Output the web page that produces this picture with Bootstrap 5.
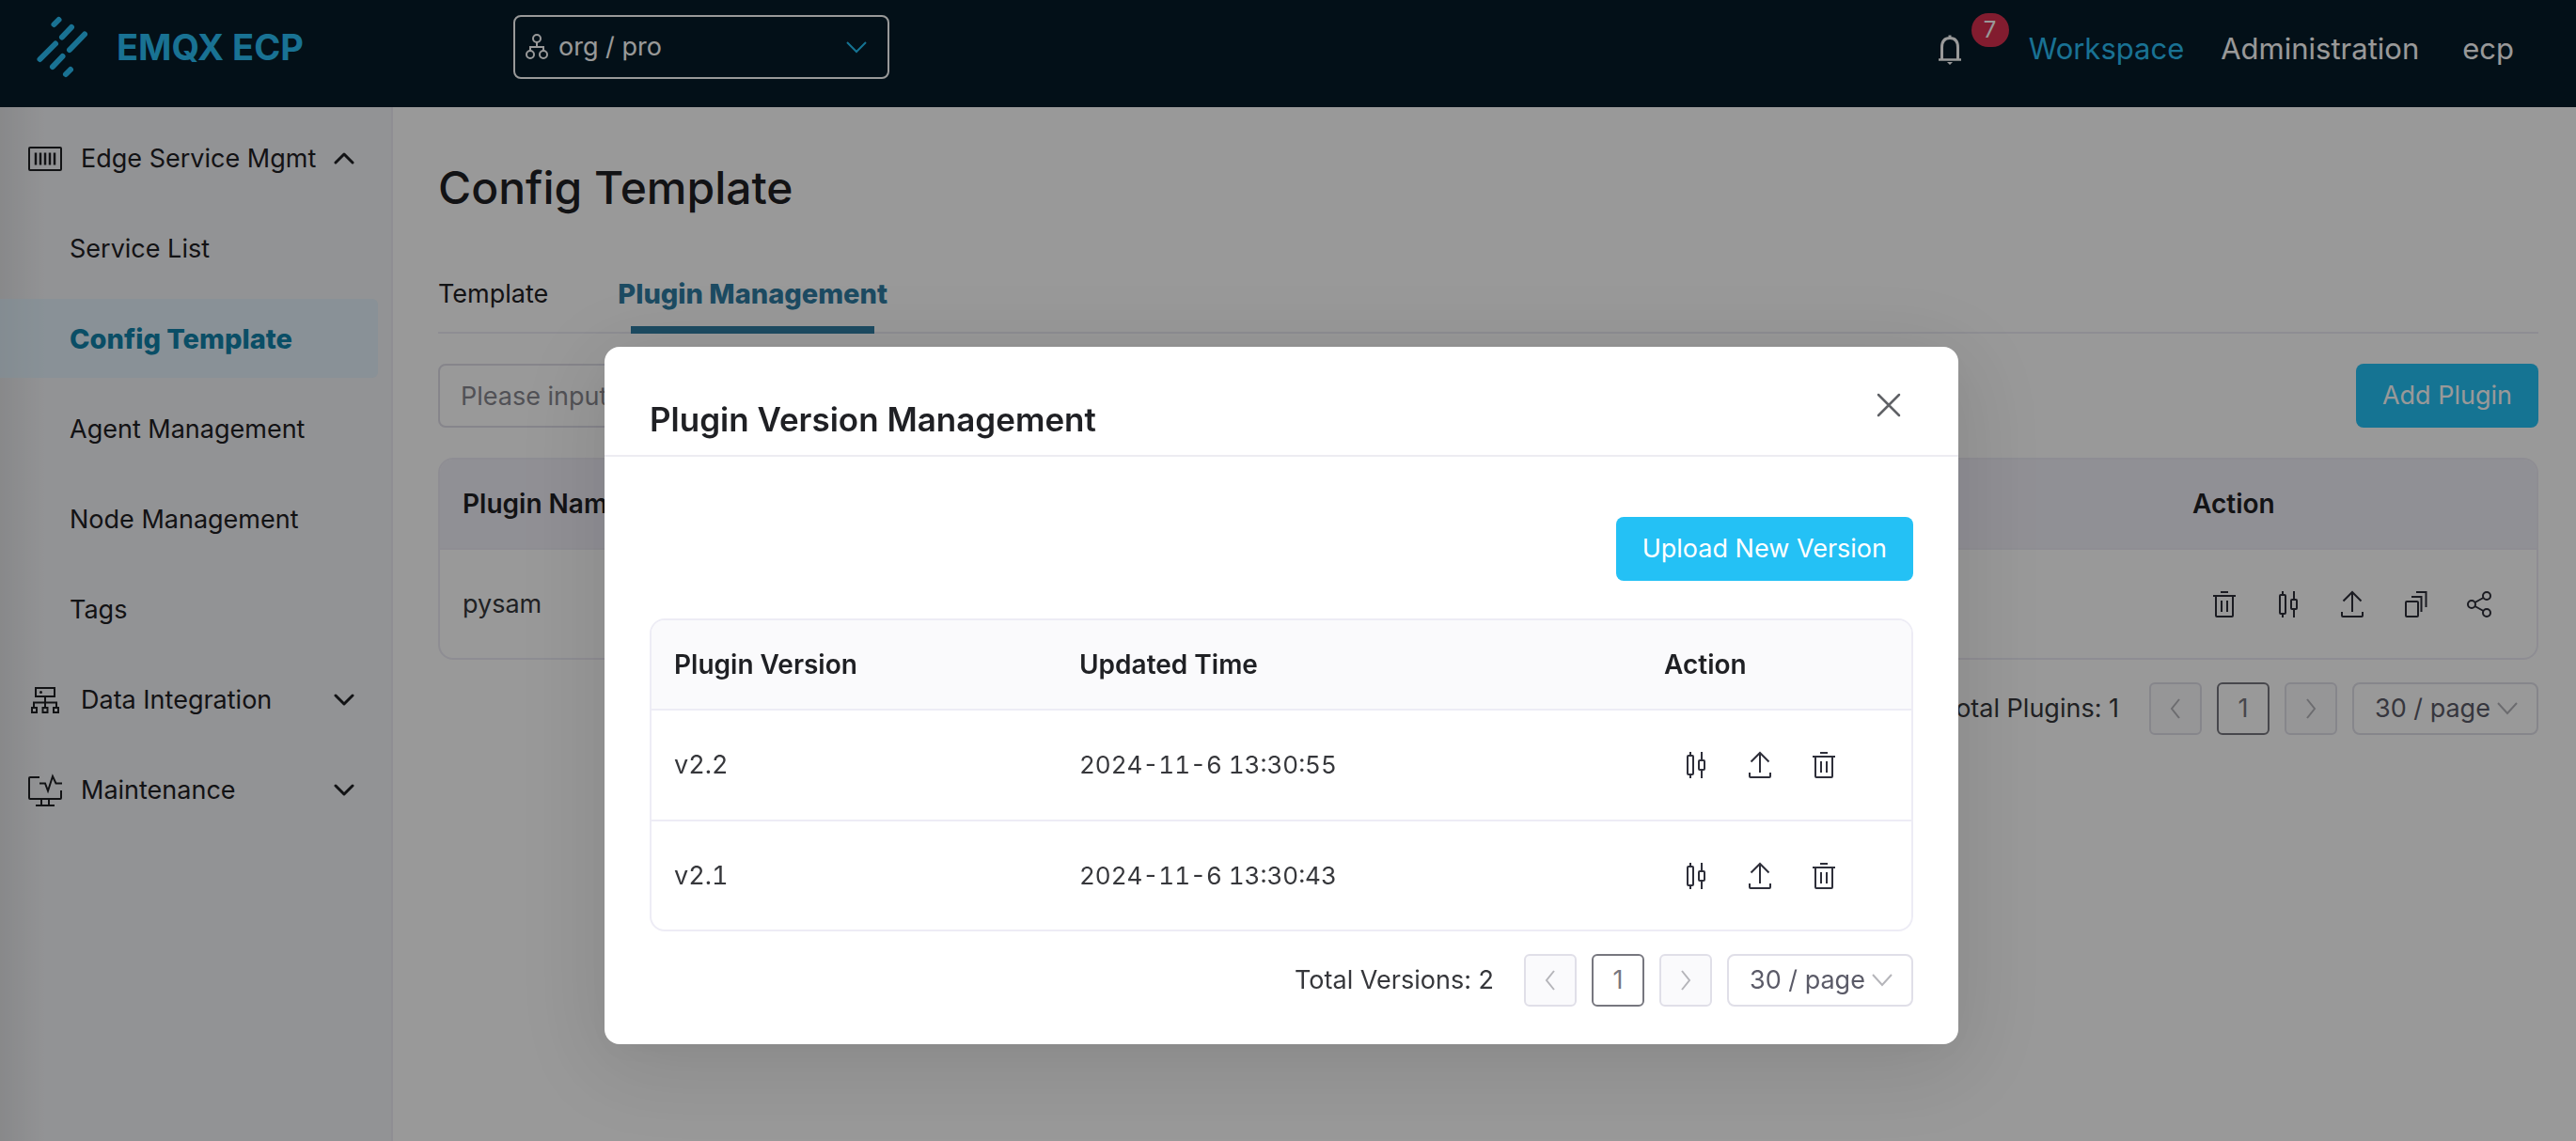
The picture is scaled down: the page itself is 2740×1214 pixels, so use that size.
<!DOCTYPE html>
<html lang="en">
<head>
<meta charset="utf-8">
<meta name="viewport" content="width=device-width, initial-scale=1">
<title>EMQX ECP - Config Template</title>
<link href="https://cdn.jsdelivr.net/npm/bootstrap@5.3.0/dist/css/bootstrap.min.css" rel="stylesheet">
<style>
  :root { --brand: #24c1f5; --line: #edecf5; --ink: #1f2024; }
  body { font-family: Inter, "Liberation Sans", sans-serif; font-size: 27px; line-height: 40px; color: var(--ink); background: #fff; }
  svg { display: block; fill: none; stroke: currentColor; stroke-width: 2; flex: none; }
  a { text-decoration: none; }

  /* top bar */
  .topbar { background: #051c29; height: 114px; padding: 0 66px 14px 36px; }
  .brand-link { width: 510px; gap: 28px; color: #2bbff5; font-size: 38px; font-weight: 700; }
  .brand-link svg { stroke-width: 6; stroke-linecap: round; }
  .org-box { width: 400px; height: 68px; border: 2px solid #fff; border-radius: 8px; color: #fff; padding: 0 8px 0 10px; gap: 10px; }
  .org-box select, .page-size { appearance: none; background: transparent no-repeat; outline: 0; }
  .org-box select { border: 0; color: #fff; width: 100%; padding: 0; background-position: right 14px center;
    background-image: url("data:image/svg+xml,%3Csvg xmlns='http://www.w3.org/2000/svg' width='22' height='14' fill='none' stroke='%2324c1f5' stroke-width='2'%3E%3Cpath d='M1 2l10 10L21 2'/%3E%3C/svg%3E"); }
  .top-links { font-size: 31px; padding-top: 4px; }
  .top-links a { color: #fff; }
  .top-links a.current { color: #2bbff5; margin-right: 39px; }
  .top-links .admin-link { margin-right: 46px; }
  .bell-btn { border: 0; background: none; color: #fff; padding: 0; margin-right: 66px; }
  .bell-count { top: -20px; left: 41px; width: 40px; height: 36px; border-radius: 18px; background: #d9304f; font-size: 24px; line-height: 36px; color: #fff; text-align: center; }

  /* side menu */
  .side { width: 418px; min-height: 1100px; border-right: 2px solid #eeedf5; padding: 12px 14px 0 0;
    background: linear-gradient(90deg, rgba(0,0,0,.07), transparent 48px) #f4f5f8; }
  .side a { height: 84px; margin-bottom: 12px; padding-top: 2px; padding-right: 24px; color: var(--ink); border-radius: 0 6px 6px 0; }
  .side .grp { padding-left: 28px; }
  .side .grp span { margin-left: 18px; }
  .side .sub { padding-left: 74px; }
  .side .sub.current { background: rgba(212,239,255,.5); color: #1283aa; font-size: 29px; font-weight: 800; }
  .chev { stroke-width: 3; stroke-linecap: round; stroke-linejoin: round; }

  /* main */
  .content-pane { padding: 52px 40px 0 48px; }
  .page-title { font-size: 48px; line-height: 68px; font-weight: 500; margin: 0 0 56px; }
  .tab-row { border-bottom: 2px solid var(--line); gap: 74px; height: 65px; margin-bottom: 32px; }
  .tab-row a { color: var(--ink); height: 65px; padding-top: 3px; position: relative; }
  .tab-row a.current { color: #2f7da3; font-size: 29px; font-weight: 800; }
  .tab-row a.current::after { content: ""; position: absolute; left: 14px; right: 14px; bottom: 0; height: 8px; background: #2f7da3; }
  .search-box { width: 560px; height: 68px; border: 2px solid #dfdee8; border-radius: 8px; padding: 0 22px; color: var(--ink); }
  .search-box::placeholder { color: #88888f; }
  .btn-brand { --bs-btn-bg: #24c1f5; --bs-btn-color: #fff; --bs-btn-hover-bg: #3fcbf8; --bs-btn-hover-color: #fff;
    height: 68px; font-size: 27px; line-height: 40px; border: 0; border-radius: 8px; padding: 0 28px; }

  .grid-wrap { border: 2px solid var(--line); border-radius: 16px; overflow: hidden; }
  .grid-wrap table { width: 100%; table-layout: fixed; }
  .grid-wrap th { height: 95px; font-size: 28px; font-weight: 600; background: #fafafc; border-bottom: 2px solid var(--line); padding: 0 24px; }
  .grid-wrap td { height: 118px; padding: 0 24px; color: #36373b; border-bottom: 2px solid var(--line); font-variant-numeric: tabular-nums; }
  .grid-wrap tr:last-child td { border-bottom: 0; height: 116px; }
  .grid-wrap .time-cell { font-size: 26px; }
  .back-grid th { background: #f1f0f9; }
  .act { width: 68px; height: 40px; border: 0; background: none; padding: 0; color: #2e2f3a; }

  .pager { gap: 16px; margin-top: 24px; color: #36373b; }
  .pager .total { margin-right: 16px; }
  .pg { width: 56px; height: 56px; border: 2px solid #e0dfe8; border-radius: 6px; background: #fafafc; color: #b5b5ba; padding: 0; }
  .pg.current { border-color: #77777f; background: #fff; color: #77777f; }
  .page-size { width: 198px; height: 56px; border: 2px solid #e0dfe8; border-radius: 8px; color: #5b5b68; padding: 0 22px; background-position: right 20px center;
    background-image: url("data:image/svg+xml,%3Csvg xmlns='http://www.w3.org/2000/svg' width='22' height='14' fill='none' stroke='%23b5b5ba' stroke-width='2'%3E%3Cpath d='M1 1l10 11L21 1'/%3E%3C/svg%3E"); }

  /* dialog */
  .modal-backdrop { --bs-backdrop-opacity: .4; }
  .version-dialog { max-width: 1440px; margin: 369px 657px 0 auto; }
  .version-dialog .modal-content { border: 0; border-radius: 16px; box-shadow: 0 18px 96px 16px rgba(0,0,0,.1), 0 8px 32px rgba(0,0,0,.03); }
  .version-dialog .modal-header { height: 117px; padding: 0 48px; border-bottom: 2px solid #edecf2; }
  .version-dialog .modal-title { font-size: 35px; line-height: 48px; font-weight: 600; padding-top: 38px; }
  .close-x { border: 0; background: none; padding: 0; color: #606266; margin: 8px 10px 0 0; }
  .version-dialog .modal-body { padding: 64px 48px 40px; }
  .version-dialog .grid-wrap { margin-top: 40px; }
</style>
</head>
<body>
<svg width="0" height="0" class="position-absolute" aria-hidden="true">
  <symbol id="i-trash" viewBox="0 0 32 32"><path d="M12 3h8M4 7h24M7 7v21q0 1 1 1h16q1 0 1-1V7M13 12v12M19 12v12"/></symbol>
  <symbol id="i-candle" viewBox="0 0 32 32"><path d="M10 2v4M10 26v4M22 2v9M22 21v9"/><rect x="7" y="6" width="6" height="20" rx="1"/><rect x="19" y="11" width="6" height="10" rx="1"/></symbol>
  <symbol id="i-upload" viewBox="0 0 32 32"><path d="M16 3v21M6.500 12.500L16 3l9.500 9.500M5 24v4q0 1 1 1h20q1 0 1-1v-4"/></symbol>
  <symbol id="i-copy" viewBox="0 0 32 32"><rect x="5" y="13" width="13" height="16" rx="1"/><path d="M11 8h10.500v16M16 3h10.500v16"/></symbol>
  <symbol id="i-share" viewBox="0 0 32 32"><circle cx="7" cy="16" r="4"/><circle cx="23" cy="7" r="4"/><circle cx="23" cy="25" r="4"/><path d="M10.500 14l9-5M10.500 18l9 5"/></symbol>
  <symbol id="i-prev" viewBox="0 0 20 28"><path d="M14 4L6 14l8 10"/></symbol>
  <symbol id="i-next" viewBox="0 0 20 28"><path d="M6 4l8 10-8 10"/></symbol>
  <symbol id="i-down" viewBox="0 0 24 14"><path d="M3 2l9 9 9-9"/></symbol>
  <symbol id="i-up" viewBox="0 0 24 14"><path d="M3 11l9-9 9 9"/></symbol>
</svg>

<header class="topbar d-flex align-items-center">
  <a href="#" class="brand-link d-flex align-items-center">
    <svg width="60" height="72" viewBox="36 14 60 72" aria-hidden="true"><path d="M57.500 26l5-5M66 39.500L76 29M74 53l16-16.500M42.500 63L59 46.500M56 71l10.500-11M70 79l5-5"/></svg>
    <span>EMQX ECP</span>
  </a>
  <div class="org-box d-flex align-items-center">
    <svg width="26" height="28" viewBox="0 0 26 28" aria-hidden="true"><circle cx="13" cy="5" r="4"/><circle cx="6" cy="22" r="4"/><circle cx="20" cy="22" r="4"/><path d="M13 9v5M6 18v-4h14v4"/></svg>
    <select aria-label="Project"><option>org / pro</option></select>
  </div>
  <nav class="top-links d-flex align-items-center ms-auto" aria-label="Main">
    <button class="bell-btn position-relative" type="button" aria-label="Notifications">
      <svg width="36" height="36" viewBox="0 0 36 36"><path d="M18 3.500v3M9.500 29V16.500Q9.500 6.500 18 6.500T26.500 16.500V29" stroke-width="3"/><path d="M6 29.500h24" stroke-width="2.500"/><path d="M15 32h6l-3 3z" fill="currentColor" stroke="none"/></svg>
      <span class="bell-count position-absolute">7</span>
    </button>
    <a href="#" class="current">Workspace</a>
    <a href="#" class="admin-link">Administration</a>
    <a href="#">ecp</a>
  </nav>
</header>

<div class="d-flex">
  <nav class="side flex-shrink-0" aria-label="Side menu">
    <a href="#" class="grp d-flex align-items-center">
      <svg width="40" height="40" viewBox="0 0 40 40"><rect x="3" y="8" width="34" height="24" rx="1"/><path d="M10 13.500v13M15 13.500v13M20 13.500v13M25 13.500v13M30 13.500v13" stroke-width="2.500"/></svg>
      <span class="text-nowrap">Edge Service Mgmt</span>
      <svg class="chev ms-auto" width="24" height="14"><use href="#i-up"/></svg>
    </a>
    <a href="#" class="sub d-flex align-items-center">Service List</a>
    <a href="#" class="sub current d-flex align-items-center">Config Template</a>
    <a href="#" class="sub d-flex align-items-center">Agent Management</a>
    <a href="#" class="sub d-flex align-items-center">Node Management</a>
    <a href="#" class="sub d-flex align-items-center">Tags</a>
    <a href="#" class="grp d-flex align-items-center">
      <svg width="40" height="40" viewBox="0 0 40 40"><path d="M10 7h20v9H10zM20 16v12M8 28v-5.500h24V28M6 28h5v5H6zM17.500 28h5v5h-5zM29 28h5v5h-5z"/><circle cx="15.500" cy="11.500" r="1.500" fill="currentColor" stroke="none"/></svg>
      <span>Data Integration</span>
      <svg class="chev ms-auto" width="24" height="14"><use href="#i-down"/></svg>
    </a>
    <a href="#" class="grp d-flex align-items-center">
      <svg width="40" height="40" viewBox="0 0 40 40"><path d="M14 6H4q-1 0-1 1v21q0 1 1 1h32q1 0 1-1v-8M14 12.500h6l3 8L28 5l3.500 7.500H38M16 29v7M24 29v7M10 36h20"/></svg>
      <span>Maintenance</span>
      <svg class="chev ms-auto" width="24" height="14"><use href="#i-down"/></svg>
    </a>
  </nav>

  <main class="content-pane flex-grow-1">
    <h1 class="page-title">Config Template</h1>
    <div class="tab-row d-flex">
      <a href="#">Template</a>
      <a href="#" class="current">Plugin Management</a>
    </div>
    <div class="d-flex justify-content-between mb-4 pb-2">
      <input class="search-box" type="text" placeholder="Please input" aria-label="Plugin name">
      <button class="btn btn-brand" type="button">Add Plugin</button>
    </div>
    <div class="grid-wrap back-grid">
      <table>
        <colgroup><col><col style="width:390px"></colgroup>
        <thead><tr><th>Plugin Name</th><th>Action</th></tr></thead>
        <tbody><tr><td>pysam</td><td><div class="d-flex">
          <button class="act" type="button" aria-label="Delete"><svg class="mx-auto" width="32" height="32"><use href="#i-trash"/></svg></button>
          <button class="act" type="button" aria-label="Versions"><svg class="mx-auto" width="32" height="32"><use href="#i-candle"/></svg></button>
          <button class="act" type="button" aria-label="Upload"><svg class="mx-auto" width="32" height="32"><use href="#i-upload"/></svg></button>
          <button class="act" type="button" aria-label="Copy"><svg class="mx-auto" width="32" height="32"><use href="#i-copy"/></svg></button>
          <button class="act" type="button" aria-label="Share"><svg class="mx-auto" width="32" height="32"><use href="#i-share"/></svg></button>
        </div></td></tr></tbody>
      </table>
    </div>
    <div class="pager d-flex justify-content-end align-items-center">
      <span class="total">Total Plugins: 1</span>
      <button class="pg" type="button" aria-label="Previous"><svg class="mx-auto" width="20" height="28"><use href="#i-prev"/></svg></button>
      <button class="pg current" type="button">1</button>
      <button class="pg" type="button" aria-label="Next"><svg class="mx-auto" width="20" height="28"><use href="#i-next"/></svg></button>
      <select class="page-size" aria-label="Plugins per page"><option>30 / page</option></select>
    </div>
  </main>
</div>

<div class="modal-backdrop show"></div>
<div class="modal show d-block" tabindex="-1" role="dialog" aria-labelledby="dlg-title">
  <div class="modal-dialog version-dialog">
    <div class="modal-content">
      <div class="modal-header">
        <h2 class="modal-title" id="dlg-title">Plugin Version Management</h2>
        <button class="close-x" type="button" aria-label="Close"><svg width="32" height="32" viewBox="0 0 32 32" stroke-linecap="round"><path d="M5 5l22 22M27 5L5 27" stroke-width="2.500"/></svg></button>
      </div>
      <div class="modal-body">
        <div class="d-flex justify-content-end">
          <button class="btn btn-brand" type="button">Upload New Version</button>
        </div>
        <div class="grid-wrap">
          <table>
            <colgroup><col style="width:431px"><col><col style="width:287px"></colgroup>
            <thead><tr><th>Plugin Version</th><th>Updated Time</th><th>Action</th></tr></thead>
            <tbody>
              <tr><td>v2.2</td><td class="time-cell">2024-11-6 13:30:55</td><td><div class="d-flex">
                <button class="act" type="button" aria-label="Compare"><svg class="mx-auto" width="32" height="32"><use href="#i-candle"/></svg></button>
                <button class="act" type="button" aria-label="Upload"><svg class="mx-auto" width="32" height="32"><use href="#i-upload"/></svg></button>
                <button class="act" type="button" aria-label="Delete"><svg class="mx-auto" width="32" height="32"><use href="#i-trash"/></svg></button>
              </div></td></tr>
              <tr><td>v2.1</td><td class="time-cell">2024-11-6 13:30:43</td><td><div class="d-flex">
                <button class="act" type="button" aria-label="Compare"><svg class="mx-auto" width="32" height="32"><use href="#i-candle"/></svg></button>
                <button class="act" type="button" aria-label="Upload"><svg class="mx-auto" width="32" height="32"><use href="#i-upload"/></svg></button>
                <button class="act" type="button" aria-label="Delete"><svg class="mx-auto" width="32" height="32"><use href="#i-trash"/></svg></button>
              </div></td></tr>
            </tbody>
          </table>
        </div>
        <div class="pager d-flex justify-content-end align-items-center">
          <span class="total">Total Versions: 2</span>
          <button class="pg" type="button" aria-label="Previous"><svg class="mx-auto" width="20" height="28"><use href="#i-prev"/></svg></button>
          <button class="pg current" type="button">1</button>
          <button class="pg" type="button" aria-label="Next"><svg class="mx-auto" width="20" height="28"><use href="#i-next"/></svg></button>
          <select class="page-size" aria-label="Versions per page"><option>30 / page</option></select>
        </div>
      </div>
    </div>
  </div>
</div>
<script src="https://cdn.jsdelivr.net/npm/bootstrap@5.3.0/dist/js/bootstrap.bundle.min.js"></script>
</body>
</html>
